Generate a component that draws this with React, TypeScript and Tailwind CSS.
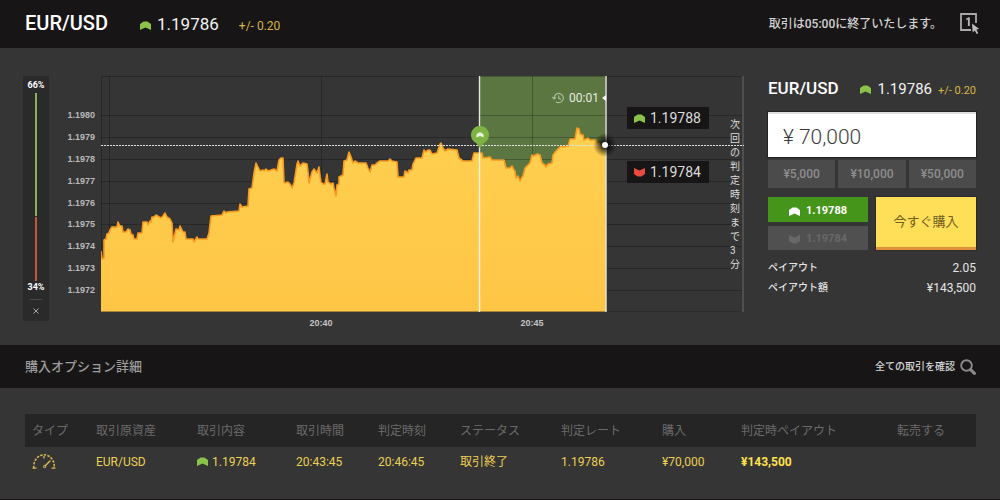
import type { ReactNode } from 'react';

const CHART = { left: 101, top: 76, width: 643, height: 236 };

const yTicks = ['1.1980', '1.1979', '1.1978', '1.1977', '1.1976', '1.1975', '1.1974', '1.1973', '1.1972'];
const yGrid = [115, 137, 159, 181, 203, 224, 246, 268, 290];
const xGrid = [109, 321, 532];
const xTicks = [
  { x: 321, label: '20:40' },
  { x: 532, label: '20:45' },
];

const BUY_X = 480;
const NOW_X = 605;

const line =
  '101,251 102,259 104,258 104,240 106,239 107,234 109,233 110,230 112,227 117,227 118,222 120,226 122,226 123,232 126,232 128,229 130,230 131,234 133,235 134,239 137,239 138,233 142,233 143,222 147,222 148,225 150,221 151,222 152,217 154,217 156,215 161,218 163,216 165,213 167,217 170,219 172,223 173,242 176,229 179,230 180,226 183,232 185,232 186,239 193,239 194,242 197,237 198,239 207,239 209,233 211,216 222,215 224,211 226,213 227,212 239,211 240,204 242,207 248,206 249,189 252,188 254,173 256,163 258,167 260,171 263,170 264,171 266,169 268,171 274,169 277,171 279,160 281,158 283,158 284,183 288,182 290,184 292,188 294,183 297,164 298,161 300,166 303,163 307,164 308,172 309,183 312,172 314,169 317,173 319,167 320,176 321,182 323,184 325,184 327,174 328,182 331,184 333,183 334,188 336,196 337,185 339,184 339,177 343,175 344,161 347,160 349,152 351,157 353,163 355,161 358,163 366,163 368,168 370,172 372,165 375,165 377,163 380,161 388,161 390,159 392,161 397,162 398,177 404,177 405,171 408,173 409,170 412,170 413,164 416,158 422,158 424,150 426,152 428,150 430,150 432,154 437,153 439,147 440,144 441,143 443,148 445,151 448,149 457,150 459,158 463,161 472,161 474,153 482,153 483,158 490,157 492,160 504,160 506,168 510,168 512,166 514,170 515,171 516,178 518,176 520,181 522,177 523,176 525,168 528,165 530,163 532,155 534,156 537,154 540,155 542,163 545,165 546,167 548,164 552,163 553,155 556,151 558,149 561,146 563,147 568,146 570,139 575,139 577,128 579,129 580,134 583,135 584,140 588,138 590,140 596,140 597,143 602,145 606,147';

const arrows = {
  up: 'M0 3 L3.6 0.4 H7.4 L11 3 V9 L5.5 6.6 L0 9Z',
  down: 'M0 0 L5.5 2.4 L11 0 V6 L7.4 8.6 H3.6 L0 6Z',
};

function Arrow({ dir = 'up', className }: { dir?: 'up' | 'down'; className: string }) {
  return (
    <svg viewBox="0 0 11 9" className={`h-[9px] w-[11px] shrink-0 ${className}`} aria-hidden="true">
      <path d={arrows[dir]} fill="currentColor" />
    </svg>
  );
}

function ClickOnce() {
  return (
    <svg viewBox="0 0 20 22" className="h-[22px] w-5" fill="none" aria-hidden="true">
      <path d="M11 17 H1 V1 H16 V10" stroke="#a9a9a9" strokeWidth="1.8" />
      <path d="M6.3 5.6 L8.6 4.2 H9.8 V13 H7.9 V6.6 L6.3 7.3Z" fill="#b5b5b5" />
      <path d="M12 10.5 L19.2 16 L16.4 16.6 L18.2 20.2 L16.6 21 L14.8 17.4 L12.7 19.4Z" fill="#bdbdbd" />
    </svg>
  );
}

function Magnifier() {
  return (
    <svg viewBox="0 0 16 16" className="size-4" fill="none" stroke="#8c8a8a" aria-hidden="true">
      <circle cx="6.5" cy="6.5" r="5.3" strokeWidth="1.9" />
      <path d="M10.6 10.6 L14.4 14.4" strokeWidth="3" strokeLinecap="round" />
    </svg>
  );
}

function Gauge() {
  return (
    <svg viewBox="0 0 24 16" className="h-4 w-6" fill="none" stroke="#d9bb50" aria-label="スピード">
      <path d="M1.8 14 A10.3 11.6 0 1 1 22.2 14" strokeWidth="1.5" strokeDasharray="2.4 1.3" />
      <path d="M0.5 14.2 H4.5 M19.5 14.2 H23.5 M12 2 V4.5" strokeWidth="1.3" />
      <path d="M18 7 L13 12" strokeWidth="1.4" strokeLinecap="round" />
      <circle cx="12.6" cy="12.6" r="1.2" strokeWidth="1" />
    </svg>
  );
}

function History() {
  return (
    <svg viewBox="0 0 12 12" className="size-3" fill="none" stroke="#a9bb98" strokeWidth="1.2" aria-hidden="true">
      <path d="M2 6 A4.6 4.6 0 1 1 3.8 9.7" />
      <path d="M0.3 5 L2 7 L3.8 5" />
      <path d="M6.6 3.4 V6.3 L8.7 7.4" />
    </svg>
  );
}

function Pin() {
  return (
    <svg viewBox="0 0 18 22" className="h-[22px] w-[18px]" aria-hidden="true">
      <path d="M9 22 L5.4 17.2 A9 9 0 1 1 12.6 17.2Z" fill="#7db342" />
      <path d="M5.4 8.4 L7.8 6.5 H10.2 L12.6 8.4 V11.6 L9 10 L5.4 11.6Z" fill="#e9f3dc" />
    </svg>
  );
}

/** Puts an overlay at a horizontal position given in chart units. */
function At({ x, className, children }: { x: number; className: string; children: ReactNode }) {
  return (
    <div className={`absolute ${className}`} style={{ left: `${((x - CHART.left) / CHART.width) * 100}%` }}>
      {children}
    </div>
  );
}

function PriceTag({ dir, price }: { dir: 'up' | 'down'; price: string }) {
  return (
    <div className="flex h-[22px] items-center gap-[5px] bg-[#171515] pr-2 pl-[7px] text-sm text-[#dcdcdc]">
      <Arrow dir={dir} className={dir === 'up' ? 'text-[#8bc34a]' : 'text-[#e84c3d]'} />
      {price}
    </div>
  );
}

function Sentiment() {
  return (
    <aside className="flex w-[26px] flex-col items-center bg-[#2a2a2a] pt-[3px] text-[9px] leading-3 font-bold text-white">
      <span>66%</span>
      <div className="mt-[2px] h-[123px] w-[2px] bg-[#8bb158]" />
      <div className="mt-px h-[64px] w-[2px] bg-[#c2583a]" />
      <span>34%</span>
      <div className="mt-[6px] h-px w-3 bg-[#484848]" />
      <button type="button" aria-label="閉じる" className="flex h-[21px] w-full items-center justify-center">
        <svg viewBox="0 0 6 6" className="size-[6px]" stroke="#a8a8a8" strokeWidth="1" aria-hidden="true">
          <path d="M0.5 0.5 L5.5 5.5 M5.5 0.5 L0.5 5.5" />
        </svg>
      </button>
    </aside>
  );
}

function Chart() {
  const bottom = CHART.top + CHART.height;
  const right = CHART.left + CHART.width;
  return (
    <div className="flex min-w-0 grow">
      <div className="mt-[33px] flex h-[187px] w-[52px] shrink-0 flex-col justify-between pr-[6px] text-right font-['Liberation_Sans',sans-serif] text-[9px] leading-3 font-bold text-[#b9b9b9]">
        {yTicks.map((t) => (
          <span key={t}>{t}</span>
        ))}
      </div>
      <div className="relative min-w-0 grow">
        <svg
          viewBox={`${CHART.left} ${CHART.top} ${CHART.width} ${CHART.height}`}
          preserveAspectRatio="none"
          className="h-[236px] w-full"
          role="img"
          aria-label="EUR/USD"
        >
          <defs>
            <linearGradient id="area" x1="0" y1="0" x2="0" y2="1">
              <stop offset="0" stopColor="#ffd050" />
              <stop offset="1" stopColor="#ffc545" />
            </linearGradient>
          </defs>
          <rect x={BUY_X} y={CHART.top} width={NOW_X - BUY_X} height={CHART.height} fill="#5b7640" />
          <g fill="none" stroke="#000" strokeOpacity="0.24">
            {xGrid.map((x) => (
              <path key={x} d={`M${x + 0.5} ${CHART.top} V${bottom}`} />
            ))}
            {yGrid.map((y) => (
              <path key={y} d={`M${CHART.left} ${y + 0.5} H${right}`} />
            ))}
            <path d={`M${CHART.left + 0.5} ${bottom} V${CHART.top + 0.5} H${right}`} />
          </g>
          <polygon points={`101,312 ${line} 606,312`} fill="url(#area)" />
          <polyline points={line} fill="none" stroke="#f89a1f" strokeWidth="1.6" strokeLinejoin="round" />
          <path d={`M${CHART.left} ${bottom - 0.5} H${right}`} stroke="#242424" strokeOpacity="0.4" />
          <path d={`M${BUY_X - 0.5} ${CHART.top} V${bottom}`} stroke="#fff" strokeOpacity="0.35" strokeWidth="2" />
          <path d={`M${BUY_X - 0.5} ${CHART.top} V${bottom}`} stroke="#fff" strokeOpacity="0.8" />
          <path d={`M${NOW_X + 1} ${CHART.top} V${bottom}`} stroke="#dfe2d8" strokeWidth="1.5" />
          <path d={`M${right - 1} ${CHART.top} V${bottom}`} stroke="#4f4f4f" strokeWidth="2" />
          <path d={`M${CHART.left} 145.5 H${right}`} stroke="#e2e2e2" strokeDasharray="2 1" />
        </svg>
        <At x={BUY_X} className="top-[50px] -translate-x-1/2">
          <Pin />
        </At>
        <At x={NOW_X} className="top-[69px]">
          <div className="absolute -top-3 -left-3 size-6 rounded-full bg-[radial-gradient(circle,rgba(0,0,0,0.75)_20%,transparent_70%)]" />
          <div className="absolute -top-[3px] -left-[3px] size-[6px] rounded-full bg-white" />
        </At>
        <At x={NOW_X + 1} className="top-[14px] -translate-x-full">
          <div className="flex items-center text-[12px] leading-4 text-[#e8ece4]">
            <History />
            <time className="ml-[5px]">00:01</time>
            <svg viewBox="0 0 4 6" className="ml-[3px] h-[6px] w-1 text-white" aria-hidden="true">
              <path d="M0 3 L4 0 V6Z" fill="currentColor" />
            </svg>
          </div>
        </At>
        <At x={627} className="top-[31px]">
          <PriceTag dir="up" price="1.19788" />
        </At>
        <At x={627} className="top-[85px]">
          <PriceTag dir="down" price="1.19784" />
        </At>
        <p className="absolute top-[42px] right-[3px] w-[11px] text-[10px] leading-[14px] break-all text-[#dedede]">
          次回の判定時刻まで3分
        </p>
        {xTicks.map((t) => (
          <At key={t.label} x={t.x} className="top-[241px] -translate-x-1/2">
            <span className="block font-['Liberation_Sans',sans-serif] text-[9px] leading-3 font-bold text-[#c4c4c4]">
              {t.label}
            </span>
          </At>
        ))}
      </div>
    </div>
  );
}

function Order() {
  return (
    <form className="ml-6 w-[208px] shrink-0" onSubmit={(e) => e.preventDefault()}>
      <div className="flex h-6 items-baseline justify-between">
        <h2 className="text-[17px] leading-6 font-medium text-white">EUR/USD</h2>
        <div className="flex items-baseline gap-[6px]">
          <Arrow className="text-[#8bc34a]" />
          <span className="text-[15px] text-[#f2f2f2]">1.19786</span>
          <span className="text-[11px] text-[#d8b745]">+/- 0.20</span>
        </div>
      </div>
      <input
        type="text"
        aria-label="金額"
        defaultValue="¥ 70,000"
        className="mt-3 block h-[45px] w-full rounded-none border-t-2 border-[#dedede] bg-white px-[15px] pt-[2px] text-[21px] font-light text-[#3c3c3c] shadow-[0_0_0_1px_#222] outline-none"
      />
      <div className="mt-[3px] grid grid-cols-3 gap-[3px]">
        {['¥5,000', '¥10,000', '¥50,000'].map((v) => (
          <button key={v} type="button" className="h-7 bg-[#4b4b4b] text-[12px] font-medium text-[#8e8e8e]">
            {v}
          </button>
        ))}
      </div>
      <div className="mt-[9px] grid grid-cols-2 gap-2">
        <div className="flex flex-col gap-1 text-[11px] font-bold">
          <button
            type="button"
            className="flex h-[25px] items-center justify-center gap-[6px] bg-[#46951b] pt-[3px] text-white"
          >
            <Arrow className="text-white" />
            1.19788
          </button>
          <button
            type="button"
            disabled
            className="flex h-6 items-center justify-center gap-[6px] bg-[#505050] pt-[2px] text-[#686868]"
          >
            <Arrow dir="down" className="text-[#686868]" />
            1.19784
          </button>
        </div>
        <button
          type="submit"
          className="border-b-[3px] border-[#e08f3c] bg-[#ffdf57] text-[13px] text-[#6f5d22] shadow-[0_0_0_1px_#2b2b2b]"
        >
          今すぐ購入
        </button>
      </div>
      <dl className="mt-2 text-[12px] leading-5 text-[#e4e4e4]">
        <div className="flex justify-between">
          <dt className="text-[10px] font-medium">ペイアウト</dt>
          <dd>2.05</dd>
        </div>
        <div className="flex justify-between">
          <dt className="text-[10px] font-medium">ペイアウト額</dt>
          <dd>¥143,500</dd>
        </div>
      </dl>
    </form>
  );
}

function Trades() {
  return (
    <table className="w-full table-fixed text-left text-[12px]">
      <colgroup>
        <col className="w-[64px]" />
        <col className="w-[101px]" />
        <col className="w-[99px]" />
        <col className="w-[82px]" />
        <col className="w-[82px]" />
        <col className="w-[101px]" />
        <col className="w-[101px]" />
        <col className="w-[79px]" />
        <col className="w-[156px]" />
        <col className="w-[86px]" />
      </colgroup>
      <thead>
        <tr className="h-[33px] bg-[#252525] text-[#6b6b6b]">
          {['タイプ', '取引原資産', '取引内容', '取引時間', '判定時刻', 'ステータス', '判定レート', '購入', '判定時ペイアウト', '転売する'].map((h) => (
            <th key={h} scope="col" className="pl-[7px] font-normal whitespace-nowrap">
              {h}
            </th>
          ))}
        </tr>
      </thead>
      <tbody>
        <tr className="h-[29px] text-[#ecd053] *:pl-[7px] *:whitespace-nowrap">
          <td>
            <Gauge />
          </td>
          <td>EUR/USD</td>
          <td>
            <span className="flex items-center gap-1">
              <Arrow className="text-[#8bc34a]" />
              1.19784
            </span>
          </td>
          <td>20:43:45</td>
          <td>20:46:45</td>
          <td>取引終了</td>
          <td>1.19786</td>
          <td>¥70,000</td>
          <td className="font-bold text-[#ffe14f]">¥143,500</td>
          <td />
        </tr>
      </tbody>
    </table>
  );
}

export default function App() {
  return (
    <div className="min-h-screen min-w-[900px] border-b border-[#171515] bg-[#353535] font-['Roboto','Noto_Sans_CJK_JP',sans-serif]">
      <header className="flex h-12 items-center justify-between bg-[#171515] pr-[20px] pl-[25px]">
        <div className="flex items-baseline">
          <h1 className="text-[20px] leading-6 font-medium text-white">EUR/USD</h1>
          <Arrow className="ml-8 text-[#8bc34a]" />
          <span className="ml-[6px] text-[17px] text-[#f2f2f2]">1.19786</span>
          <span className="ml-5 text-[12px] text-[#d8b745]">+/- 0.20</span>
        </div>
        <div className="flex items-center gap-[18px]">
          <p className="text-[12px] font-medium text-[#d2d2d2]">取引は05:00に終了いたします。</p>
          <button type="button" aria-label="ワンクリック取引">
            <ClickOnce />
          </button>
        </div>
      </header>
      <main>
        <section className="flex h-[297px] items-start pt-7 pr-6 pl-[23px]">
          <Sentiment />
          <Chart />
          <Order />
        </section>
        <section>
          <div className="flex h-[43px] items-center justify-between bg-[#171515] pr-6 pl-[25px]">
            <h2 className="text-[13px] font-medium text-[#9d9b9b]">購入オプション詳細</h2>
            <a href="#all" className="flex items-center gap-[5px] text-[10px] font-medium text-[#d6d6d6]">
              全ての取引を確認
              <Magnifier />
            </a>
          </div>
          <div className="pt-[26px] pr-6 pl-[25px]">
            <Trades />
          </div>
        </section>
      </main>
    </div>
  );
}
